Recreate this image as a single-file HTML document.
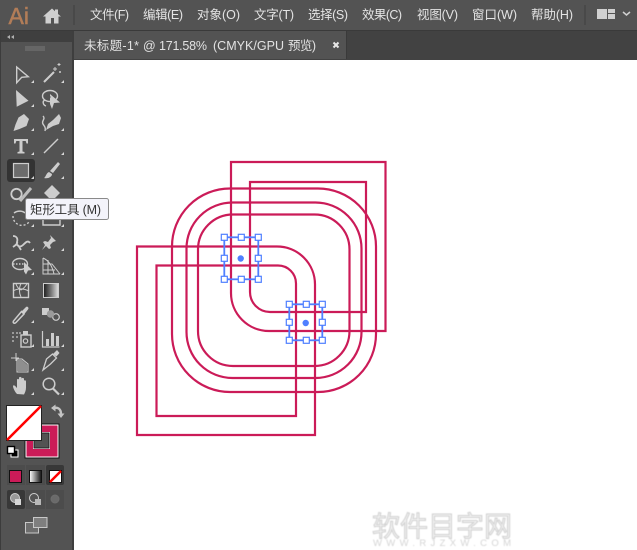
<!DOCTYPE html>
<html lang="zh"><head><meta charset="utf-8"><title>Illustrator</title>
<style>
html,body{margin:0;padding:0;width:637px;height:550px;overflow:hidden;background:#fff}
svg{display:block}
text{font-family:"Liberation Sans","Noto Sans CJK SC",sans-serif}
</style></head><body>
<svg width="637" height="550" viewBox="0 0 637 550" xmlns="http://www.w3.org/2000/svg">
<defs>
<linearGradient id="g" x1="0" x2="1" y1="0" y2="0"><stop offset="0" stop-color="#fff"/><stop offset="1" stop-color="#111"/></linearGradient>
<linearGradient id="g2" x1="0" x2="1" y1="0" y2="0"><stop offset="0" stop-color="#1c1c1c"/><stop offset=".5" stop-color="#777"/><stop offset="1" stop-color="#e0e0e0"/></linearGradient>
<filter id="b" x="-5%" y="-20%" width="110%" height="140%"><feGaussianBlur stdDeviation=".5"/></filter>
</defs>
<!-- canvas -->
<rect x="74" y="60" width="563" height="490" fill="#fff"/>
<!-- top bar -->
<rect width="637" height="30" fill="#535353"/>
<rect y="30" width="637" height="1" fill="#3a3a3a"/>
<text x="8.500" y="24" font-size="23" fill="#b27d58" stroke="#b27d58" stroke-width=".5">Ai</text>
<path d="M43 16.500L52 8.500l3 2.700V9.500h3v4.500l3 2.500h-2.500V23.500h-4.500v-5.500h-3v5.500H45.500v-7z" fill="#d0d0d0"/>
<rect x="73" y="5" width="2" height="20" fill="#494949"/>
<g font-size="12.500" fill="#e4e4e4">
<text x="90" y="19" textLength="39">文件(F)</text>
<text x="143" y="19" textLength="40">编辑(E)</text>
<text x="197" y="19" textLength="43">对象(O)</text>
<text x="254" y="19" textLength="40">文字(T)</text>
<text x="308" y="19" textLength="40">选择(S)</text>
<text x="362" y="19" textLength="40">效果(C)</text>
<text x="417" y="19" textLength="41">视图(V)</text>
<text x="472" y="19" textLength="45">窗口(W)</text>
<text x="531" y="19" textLength="42">帮助(H)</text>
</g>
<rect x="584" y="5" width="2" height="20" fill="#494949"/>
<rect x="597" y="9" width="10" height="10" fill="#d0d0d0"/>
<rect x="608" y="9" width="7" height="4" fill="#d0d0d0"/>
<rect x="608" y="14" width="7" height="5" fill="#d0d0d0"/>
<path d="M623 12l3.500 3 3.500-3" fill="none" stroke="#d0d0d0" stroke-width="1.500"/>
<!-- tab bar -->
<rect x="72" y="31" width="565" height="29" fill="#424242"/>
<rect x="74" y="31" width="272" height="28" fill="#535353"/>
<rect x="346" y="31" width="1" height="28" fill="#3a3a3a"/>
<g font-size="12.500" fill="#e2e2e2">
<text x="84" y="50" textLength="55">未标题-1*</text>
<text x="143" y="50">@</text>
<text x="159" y="50" textLength="48">171.58%</text>
<text x="213" y="50" textLength="71">(CMYK/GPU</text>
<text x="288" y="50" textLength="28">预览)</text>
</g>
<path d="M333.500 42.500l5 5m0-5l-5 5" stroke="#e8e8e8" stroke-width="2" fill="none"/>
<!-- toolbar -->
<rect y="31" width="73" height="519" fill="#535353"/>
<rect x="0" y="31" width="1" height="519" fill="#3c3c3c"/>
<rect x="72" y="31" width="2" height="519" fill="#3e3e3e"/>
<rect x="1" y="31" width="71" height="11" fill="#3f3f3f"/>
<path d="M10 35l-3 2 3 2zM14 35l-3 2 3 2z" fill="#b0b0b0"/>
<path d="M26 46v5M28 46v5M30 46v5M32 46v5M34 46v5M36 46v5M38 46v5M40 46v5M42 46v5M44 46v5" stroke="#7a7a7a" stroke-width="1"/>
<!-- selected tool bg -->
<rect x="7" y="159" width="28" height="23" rx="3" fill="#333"/>
<g fill="none" stroke="#cdcdcd" stroke-width="1.400">
<path d="M16.700 67L28.300 76.700 21.700 77.300 16.700 82.700z"/>
<path d="M44 82L54 72" stroke-width="2"/>
<path d="M55 67v4M53 69h4M59 63v3M57.500 64.500h3M60 71v2M59 72h2" stroke-width="1"/>
<ellipse cx="50" cy="96" rx="7.500" ry="5.500"/>
<path d="M45 100c-3 1-2 5 1 6"/>
<path d="M43 116c3 3-2 5 0 8 1 2 3 3 2 7"/>
<path d="M44 153L58 139"/>
<circle cx="16.500" cy="194" r="5.200" stroke-width="1.800"/>
<path d="M20 201L31 188" stroke-width="3" stroke="#bdbdbd"/>
<path d="M14 213c4-3 9-2 11 0" stroke-width="1.500"/>
<path d="M13 216a9 9 0 0 0 16 6" stroke-dasharray="2 2"/>
<path d="M43 218h17v7H43zM48 214h7v4"/>
<path d="M13 236c4 0 5 3 4 6-1 4 3 6 6 3 3-3 5-5 7-2M13 247c3-2 5-4 4-5M18 245l3 5" stroke-width="1.800"/>
<ellipse cx="20" cy="264" rx="7.500" ry="5.500"/>
<path d="M13 264h12" stroke-dasharray="1.500 1.500"/>
<path d="M43 258v16h17M43 258c5 2 9 7 11 16M43 264h9l8 10M43 270h12M48 260v14" stroke-width="1"/>
<rect x="13.500" y="283.500" width="15" height="14"/>
<path d="M13 291c5-3 10-3 16 0M21 283c-2 5-2 10 0 14M16 284c1 3 3 5 5 6M27 284c-2 3-4 5-6 6" stroke-width="1"/>
<!-- eyedropper -->
<path d="M13.500 321c-1 2 1 3 2.500 1.500L24 314l-2.500-2.500z" stroke-width="1.500"/>
<!-- blend outline circle -->
<circle cx="56" cy="317" r="3.300" stroke-width="1.200"/>
<!-- graph -->
<path d="M42.500 331v16h17" stroke-width="1.200"/>
<!-- sprayer -->
<rect x="21" y="335" width="10" height="12"/>
<circle cx="25.500" cy="341" r="2.200" stroke-width="1.200"/>
<!-- artboard cross -->
<path d="M11 358h8M16 353v8" stroke-width="1"/>
<path d="M17 359h5l6 5v8H17z" stroke-width="1"/>
<!-- slice -->
<path d="M43 370l3.500-11 6-5 4 4-6 6z" stroke-width="1.300"/>
<!-- zoom -->
<circle cx="49" cy="384" r="5.800" stroke-width="1.500"/>
<path d="M53 388.500l6 6" stroke-width="2.200"/>
</g>
<g fill="#cdcdcd">
<path d="M16 90L28.500 100.700 16.700 106.700z"/>
<path d="M50 94l10 8.500-6 .5-2 6-2-5z"/>
<circle cx="49" cy="97" r="1.500" fill="#535353"/>
<path d="M24 114l5 5-2.500 7-7 3-6 2 2-6.500 3-7z"/>
<path d="M53 120l6-6 2 4-2 6-6 2-7 4 2-6z"/>
<path d="M14 139h14v4.500h-1.500l-.8-2.500h-3.200v10.500l2 .5v1.500h-7v-1.500l2-.5V141h-3.200l-.8 2.500H14z"/>
<path d="M58 162l2 2-7 9-3-2zM49 172l3 2c0 3-4 5-8 4 2-1 2-5 5-6z"/>
<path d="M52 185l8 8-8 8-8-8z"/>
<path d="M50 235l6 6-3 1-3 3 1 3-2 1-3-3-4 4 3-5-2-3 2-1 3 1 3-4z"/>
<path d="M24 262l8 8-4 .5-2 4-2-3z"/>
<!-- eyedropper head -->
<path d="M21 312l5-5c1-1 2.500 0 2.500 1.500l-.5 1-4 5z"/>
<!-- blend -->
<rect x="42" y="308" width="7" height="7"/>
<circle cx="50.500" cy="314" r="3.700" fill="#9a9a9a"/>
<!-- sprayer -->
<path d="M12 332h2v2h-2zM16 332h2v2h-2zM19 332h2v2h-2zM12 336h2v2h-2zM16 336h2v2h-2zM12 340h2v2h-2z" fill="#9a9a9a"/>
<rect x="23" y="331" width="5" height="4"/>
<!-- bars -->
<rect x="46" y="339" width="3" height="7"/>
<rect x="51" y="333" width="3" height="13"/>
<rect x="56" y="336" width="3" height="10"/>
<!-- artboard fill -->
<path d="M18 360h4l5 4.500V371H18z" fill="#8f8f8f"/>
<!-- slice head -->
<path d="M53 354l4-4 2.500 3-3 3.500z"/>
<!-- hand -->
<path d="M17 394c-2-2-4-6-4-8 0-1 2-1 3 1l1 1v-8c0-1.500 2-1.500 2 0v-2c0-1.500 2.500-1.500 2.500 0v1c0-1.500 2.500-1.500 2.500 0v2c0-1 2-1 2 .5v6c0 3-1 5-2 7z"/>
</g>
<!-- gradient tool -->
<rect x="43.500" y="283.500" width="15" height="14" fill="url(#g2)" stroke="#cdcdcd" stroke-width="1"/>
<rect x="13.500" y="163.500" width="15" height="14" fill="#6c6c6c" stroke="#cdcdcd" stroke-width="1.200"/>
<!-- tool corner triangles -->
<g fill="#e6e6e6">
<path d="M34 80v3h-3zM64 80v3h-3zM34 128v3h-3zM64 128v3h-3zM34 152v3h-3zM64 152v3h-3zM34 176v3h-3zM64 176v3h-3zM34 200v3h-3zM64 200v3h-3zM34 224v3h-3zM64 224v3h-3zM34 248v3h-3zM64 248v3h-3zM34 272v3h-3zM64 272v3h-3zM34 320v3h-3zM64 320v3h-3zM34 344v3h-3zM64 344v3h-3zM34 368v3h-3zM64 368v3h-3zM34 392v3h-3zM64 392v3h-3zM34 104v3h-3z" opacity=".9"/>
</g>
<!-- stroke box -->
<rect x="25" y="424" width="34" height="34" fill="#fff" stroke="#111" stroke-width="1"/>
<rect x="26.500" y="425.500" width="31" height="31" fill="#cb1b58"/>
<rect x="33" y="432" width="17" height="17" fill="#fff"/>
<rect x="34" y="433" width="15" height="15" fill="#535353" stroke="#222" stroke-width="1"/>
<!-- fill box -->
<rect x="6.500" y="405.500" width="35" height="35" fill="#fff" stroke="#222"/>
<path d="M7 440L41 406" stroke="#f00" stroke-width="2.600"/>
<!-- swap -->
<path d="M54 408c4-1 7 1 7 6" fill="none" stroke="#c4c4c4" stroke-width="2.400"/>
<path d="M51 408l4.500-3.500v7zM57.500 413.500h7l-3.500 4.500z" fill="#c4c4c4"/>
<!-- default -->
<rect x="11" y="450" width="7" height="7" fill="#000" stroke="#fff" stroke-width="1"/>
<rect x="7.500" y="446.500" width="7" height="7" fill="#fff" stroke="#000" stroke-width="1.400"/>
<!-- colour mode row -->
<rect x="7" y="465" width="18" height="20" fill="#4c4c4c"/>
<rect x="26" y="465" width="19" height="20" fill="#4c4c4c"/>
<rect x="46" y="465" width="18" height="20" rx="2" fill="#383838"/>
<rect x="9.500" y="470.500" width="12" height="12" fill="#cb1b58" stroke="#111"/>
<rect x="29.500" y="470.500" width="12" height="12" fill="url(#g)" stroke="#111"/>
<rect x="49.500" y="470.500" width="12" height="12" fill="#fff" stroke="#111"/>
<path d="M50 482L61 471" stroke="#f00" stroke-width="2.500"/>
<!-- draw mode row -->
<rect x="7" y="490" width="18" height="19" rx="2" fill="#383838"/>
<rect x="26" y="490" width="19" height="19" fill="#4c4c4c"/>
<rect x="46" y="490" width="18" height="19" fill="#4c4c4c"/>
<circle cx="15" cy="498" r="4.500" fill="#9a9a9a" stroke="#d0d0d0"/>
<rect x="15" y="499" width="6" height="6" fill="#d8d8d8"/>
<circle cx="34" cy="498" r="4.500" fill="#535353" stroke="#d0d0d0"/>
<rect x="35" y="499" width="6" height="6" fill="#b8b8b8"/>
<circle cx="55" cy="499" r="4" fill="#6a6a6a" stroke="#6e6e6e"/>
<!-- screen mode -->
<rect x="25.500" y="522.500" width="13" height="10.500" fill="#6e6e6e" stroke="#c8c8c8"/>
<rect x="33.500" y="517.500" width="13.500" height="10" fill="#7f7f7f" stroke="#c8c8c8"/>
<!-- artwork -->
<g fill="none" stroke="#cb1b58" stroke-width="2.200">
<path d="M231 162H385.500V331H269A38 38 0 0 1 231 293Z"/>
<path d="M250 182H366V312H270A20 20 0 0 1 250 292Z"/>
<path d="M137 246.500H277A38 38 0 0 1 315 284.500V435H137Z"/>
<path d="M156.500 265.500H278A18 18 0 0 1 296 283.500V416H156.500Z"/>
<rect x="172" y="188.500" width="204" height="203.500" rx="58" ry="58"/>
<rect x="186.500" y="202.500" width="175" height="175.500" rx="46" ry="46"/>
<rect x="198" y="214.500" width="151.500" height="151.500" rx="35" ry="35"/>
</g>
<!-- selections -->
<g fill="none" stroke="#4f7fff" stroke-width="1.800">
<rect x="224.300" y="237.300" width="34" height="42"/>
<rect x="289.300" y="304.300" width="33" height="36"/>
</g>
<g fill="#fff" stroke="#4f7fff" stroke-width="1.200">
<rect x="221.300" y="234.300" width="6" height="6"/><rect x="238.300" y="234.300" width="6" height="6"/><rect x="255.300" y="234.300" width="6" height="6"/>
<rect x="221.300" y="255.300" width="6" height="6"/><rect x="255.300" y="255.300" width="6" height="6"/>
<rect x="221.300" y="276.300" width="6" height="6"/><rect x="238.300" y="276.300" width="6" height="6"/><rect x="255.300" y="276.300" width="6" height="6"/>
<rect x="286.300" y="301.300" width="6" height="6"/><rect x="303.300" y="301.300" width="6" height="6"/><rect x="319.300" y="301.300" width="6" height="6"/>
<rect x="286.300" y="319.300" width="6" height="6"/><rect x="319.300" y="319.300" width="6" height="6"/>
<rect x="286.300" y="337.300" width="6" height="6"/><rect x="303.300" y="337.300" width="6" height="6"/><rect x="319.300" y="337.300" width="6" height="6"/>
</g>
<circle cx="240.700" cy="258.500" r="3.200" fill="#4f7fff"/>
<circle cx="305.700" cy="323" r="3.200" fill="#4f7fff"/>
<!-- tooltip -->
<rect x="25.500" y="198.500" width="83" height="21" rx="2" fill="#f3f3fa" stroke="#8a8a8a"/>
<text x="30" y="214" font-size="12.500" fill="#333" textLength="71">矩形工具 (M)</text>
<!-- watermark -->
<g filter="url(#b)">
<text x="372" y="536" font-size="28" fill="#f4f4f4" stroke="#cfcfcf" stroke-width="1" textLength="140">软件目字网</text>
<text x="373" y="546" font-size="9.500" fill="#d4d4d4" textLength="138">WWW.RJZXW.COM</text>
</g>
</svg>
</body></html>
